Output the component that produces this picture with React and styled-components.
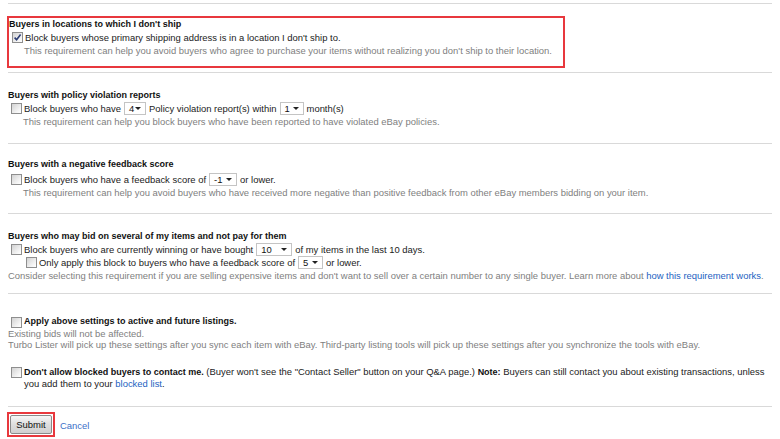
import React from "react";
import styled, { createGlobalStyle } from "styled-components";

const GlobalStyle = createGlobalStyle`
  html, body {
    margin: 0;
    padding: 0;
    background: #fff;
  }
  body {
    font-family: "Liberation Sans", Arial, sans-serif;
    font-size: 9.45px;
    color: #222;
  }
`;

const Page = styled.div`
  width: 780px;
  box-sizing: border-box;
  padding: 3px 8px 0;
`;

const Section = styled.section`
  border-top: 1px solid #d9d9d9;
  padding: ${(p) => p.$pt}px 0 ${(p) => p.$pb}px;
  line-height: ${(p) => p.$lh || 13}px;
`;

const Highlight = styled.div`
  display: ${(p) => (p.$inline ? "inline-block" : "block")};
  width: ${(p) => (p.$width ? `${p.$width}px` : "auto")};
  box-sizing: border-box;
  border: 2px solid #e8383d;
  margin-left: -1px;
  padding: ${(p) => p.$pad};
  vertical-align: middle;
`;

const Heading = styled.div`
  font-weight: bold;
  font-size: 9px;
  color: #111;
  white-space: nowrap;
`;

const Row = styled.div`
  white-space: nowrap;
  color: #222;
  padding-left: ${(p) => p.$indent || 0}px;
  margin-top: ${(p) => p.$mt || 0}px;
`;

const Note = styled.div`
  color: #808080;
  white-space: nowrap;
  padding-left: ${(p) => (p.$flush ? 0 : 15)}px;
`;

const CheckRow = styled.div`
  display: flex;
  align-items: flex-start;
  margin-top: ${(p) => p.$mt || 0}px;
`;

const CheckText = styled.div`
  flex: 1;
  color: #222;
  white-space: nowrap;
`;

const Box = styled.span`
  display: inline-block;
  flex: none;
  width: 11px;
  height: 11px;
  box-sizing: border-box;
  border: 1px solid #8e8e8e;
  background: linear-gradient(135deg, #d2d2d2 0%, #f4f4f4 70%, #ffffff 100%);
  margin: 1px 2px 0 3px;
  vertical-align: top;

  svg {
    display: block;
  }
`;

const Select = styled.span`
  display: inline-flex;
  align-items: center;
  justify-content: space-between;
  width: ${(p) => p.$w}px;
  height: 13px;
  box-sizing: border-box;
  border: 1px solid #c4c4c4;
  background: #fff;
  padding: 0 4px 0 4px;
  margin: 0 3px;
  vertical-align: top;
  line-height: 11px;
  color: #111;
`;

const Arrow = styled.span`
  width: 0;
  height: 0;
  border-left: 3px solid transparent;
  border-right: 3px solid transparent;
  border-top: 3px solid #222;
`;

const Link = styled.a`
  color: #1d5fbf;
  text-decoration: none;
  cursor: pointer;
`;

const Bold = styled.b`
  font-size: 9px;
  color: #111;
`;

const Actions = styled.div`
  border-top: 1px solid #d9d9d9;
  padding-top: 5px;
  display: flex;
  align-items: center;
  gap: 5px;
`;

const Button = styled.button`
  width: 42px;
  height: 19px;
  padding: 0;
  font-family: "Liberation Sans", Arial, sans-serif;
  font-size: 9.45px;
  color: #111;
  border: 1px solid #8a8a8a;
  border-radius: 2px;
  background: linear-gradient(#f6f6f6, #dedede 50%, #d0d0d0);
  display: block;
`;

const CancelLink = styled(Link)`
  margin-top: 1px;
  color: #3a6fc8;
`;

function Checkbox({ checked }) {
  return (
    <Box>
      {checked && (
        <svg width="9" height="9" viewBox="0 0 9 9">
          <path
            d="M1.6 4.6 L3.6 6.8 L7.6 1.6"
            fill="none"
            stroke="#2c3d74"
            strokeWidth="1.6"
          />
        </svg>
      )}
    </Box>
  );
}

function Dropdown({ value, width }) {
  return (
    <Select $w={width}>
      <span>{value}</span>
      <Arrow />
    </Select>
  );
}

export default function App() {
  return (
    <Page>
      <GlobalStyle />

      <Section $pt={12} $pb={4}>
        <Highlight $width={558} $pad="0 0 9px 0">
          <Heading>Buyers in locations to which I don't ship</Heading>
          <Row>
            <Checkbox checked />
            Block buyers whose primary shipping address is in a location I
            don't ship to.
          </Row>
          <Note>
            This requirement can help you avoid buyers who agree to purchase
            your items without realizing you don't ship to their location.
          </Note>
        </Highlight>
      </Section>

      <Section $pt={16} $pb={15}>
        <Heading>Buyers with policy violation reports</Heading>
        <Row>
          <Checkbox />
          Block buyers who have
          <Dropdown value="4" width={22} />
          Policy violation report(s) within
          <Dropdown value="1" width={24} />
          month(s)
        </Row>
        <Note>
          This requirement can help you block buyers who have been reported to
          have violated eBay policies.
        </Note>
      </Section>

      <Section $pt={14} $pb={14}>
        <Heading>Buyers with a negative feedback score</Heading>
        <Row $mt={2}>
          <Checkbox />
          Block buyers who have a feedback score of
          <Dropdown value="-1" width={28} />
          or lower.
        </Row>
        <Note>
          This requirement can help you avoid buyers who have received more
          negative than positive feedback from other eBay members bidding on
          your item.
        </Note>
      </Section>

      <Section $pt={16} $pb={11}>
        <Heading>Buyers who may bid on several of my items and not pay for them</Heading>
        <Row>
          <Checkbox />
          Block buyers who are currently winning or have bought
          <Dropdown value="10" width={36} />
          of my items in the last 10 days.
        </Row>
        <Row $indent={15}>
          <Checkbox />
          Only apply this block to buyers who have a feedback score of
          <Dropdown value="5" width={25} />
          or lower.
        </Row>
        <Note $flush>
          Consider selecting this requirement if you are selling expensive items
          and don't want to sell over a certain number to any single buyer.
          Learn more about <Link>how this requirement works</Link>.
        </Note>
      </Section>

      <Section $pt={22} $pb={17} $lh={11}>
        <CheckRow>
          <Checkbox />
          <Heading>Apply above settings to active and future listings.</Heading>
        </CheckRow>
        <Note $flush>Existing bids will not be affected.</Note>
        <Note $flush>
          Turbo Lister will pick up these settings after you sync each item
          with eBay. Third-party listing tools will pick up these settings after
          you synchronize the tools with eBay.
        </Note>
        <CheckRow $mt={16}>
          <Checkbox />
          <CheckText>
            <Bold>Don't allow blocked buyers to contact me.</Bold> (Buyer won't
            see the "Contact Seller" button on your Q&amp;A page.){" "}
            <Bold>Note:</Bold> Buyers can still contact you about existing
            transactions, unless
            <br />
            you add them to your <Link>blocked list</Link>.
          </CheckText>
        </CheckRow>
      </Section>

      <Actions>
        <Highlight $inline $pad="1px">
          <Button>Submit</Button>
        </Highlight>
        <CancelLink>Cancel</CancelLink>
      </Actions>
    </Page>
  );
}
